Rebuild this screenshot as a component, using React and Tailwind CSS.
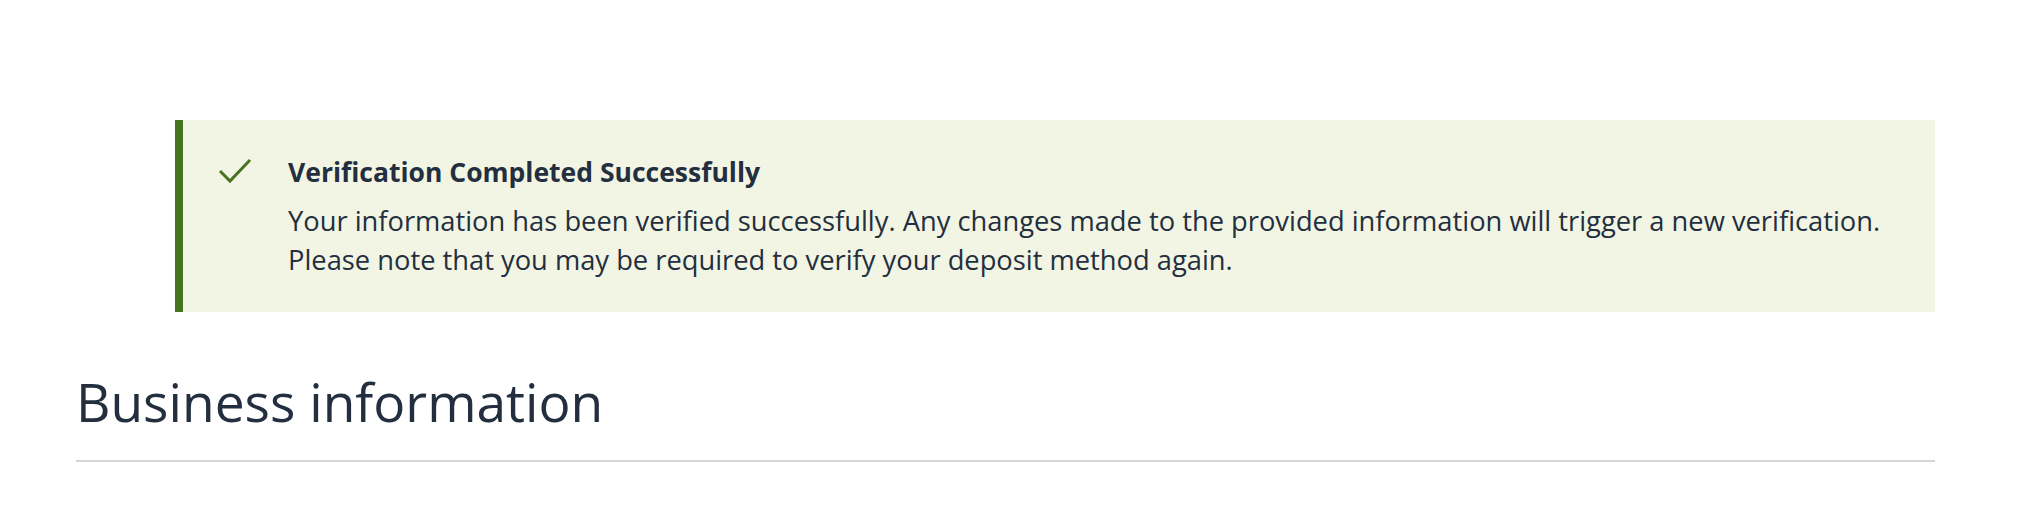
const font = { fontFamily: '"Open Sans", "Noto Sans", sans-serif' };

export default function App() {
  return (
    <div className="w-full min-h-screen bg-white pl-[76px] pr-[109px] pt-[120px] text-[#232f3e]" style={font}>
      <div className="ml-[99px] flex border-l-[8px] border-[#477320] bg-[#f2f5e3] pl-[36px] pr-6 pt-[33px] pb-[33px]">
        <svg className="mt-[4px] shrink-0" width="32" height="28" viewBox="0 0 32 28" fill="none">
          <polyline points="2,15 11,24 30,4" stroke="#477320" strokeWidth="3" strokeLinecap="square" />
        </svg>
        <div className="ml-[37px]">
          <div className="text-[26.5px] leading-[38px] font-bold">Verification Completed Successfully</div>
          <div className="mt-[10px] text-[27.3px] leading-[39px]">
            Your information has been verified successfully. Any changes made to the provided information will trigger a new verification.
            <br />
            Please note that you may be required to verify your deposit method again.
          </div>
        </div>
      </div>
      <div className="mt-[60px] border-b-2 border-[#d5d5d9] pb-[28px]">
        <h1 className="text-[53.3px] leading-[60px] font-normal">Business information</h1>
      </div>
    </div>
  );
}
